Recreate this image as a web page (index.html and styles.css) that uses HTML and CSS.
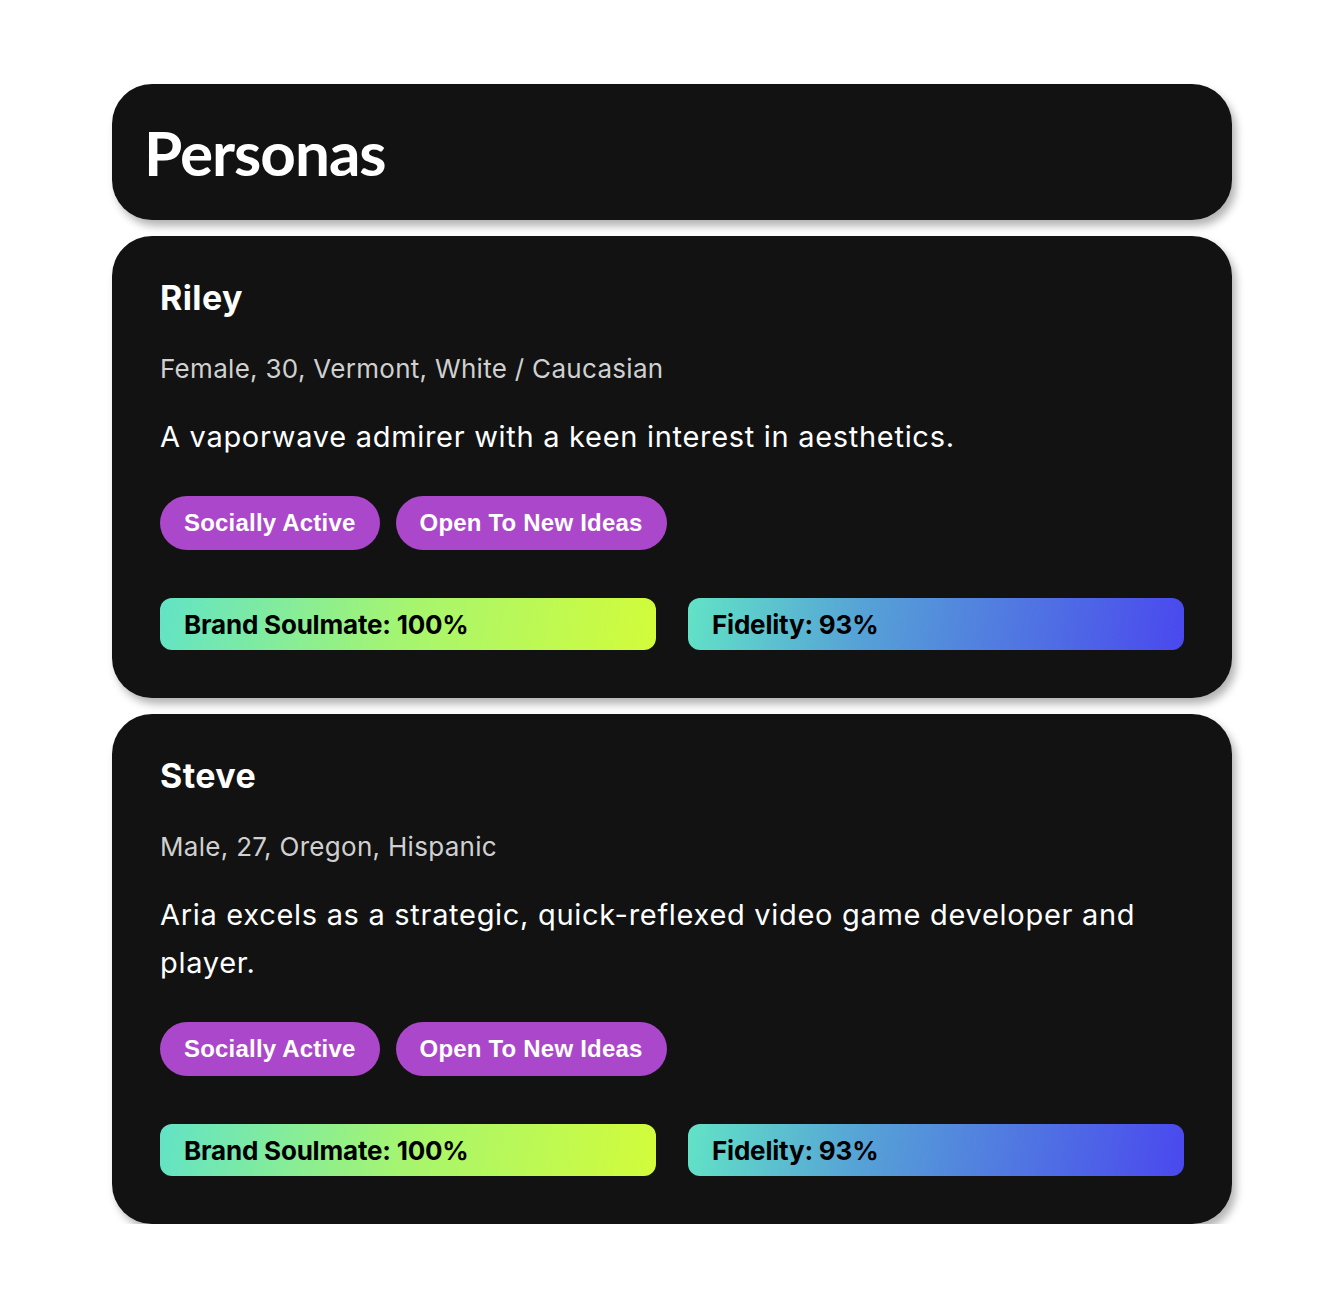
FILE: index.html
```html
<!DOCTYPE html>
<html>
<head>
<meta charset="utf-8">
<link rel="stylesheet" href="styles.css">
</head>
<body>
<main class="page">
  <header class="panel header">
    <h1 class="title">Personas</h1>
  </header>
  <section class="panel card">
    <h2 class="name">Riley</h2>
    <p class="meta">Female, 30, Vermont, White / Caucasian</p>
    <p class="desc">A vaporwave admirer with a keen interest in aesthetics.</p>
    <div class="tags">
      <span class="tag">Socially Active</span>
      <span class="tag">Open To New Ideas</span>
    </div>
    <div class="bars">
      <div class="bar bar-soul">Brand Soulmate: 100%</div>
      <div class="bar bar-fid">Fidelity: 93%</div>
    </div>
  </section>
  <section class="panel card">
    <h2 class="name">Steve</h2>
    <p class="meta">Male, 27, Oregon, Hispanic</p>
    <p class="desc">Aria excels as a strategic, quick-reflexed video game developer and player.</p>
    <div class="tags">
      <span class="tag">Socially Active</span>
      <span class="tag">Open To New Ideas</span>
    </div>
    <div class="bars">
      <div class="bar bar-soul">Brand Soulmate: 100%</div>
      <div class="bar bar-fid">Fidelity: 93%</div>
    </div>
  </section>
</main>
</body>
</html>
```
FILE: styles.css
```css
* { box-sizing: border-box; }
html, body { margin: 0; padding: 0; background: #ffffff; }
body { font-family: "Inter", "Lato", sans-serif; }
.page {
  width: 1120px;
  margin: 84px 0 0 112px;
  display: flex;
  flex-direction: column;
  gap: 16px;
}
.panel {
  background: #121212;
  border-radius: 40px;
  box-shadow: 4px 6px 8px rgba(0, 0, 0, 0.3);
  color: #ffffff;
}
.header {
  height: 136px;
  display: flex;
  align-items: center;
  padding: 0 32px;
}
.title {
  margin: 0;
  font-family: "Lato", sans-serif;
  font-size: 62px;
  font-weight: 700;
  line-height: 1;
  letter-spacing: -1px;
}
.card {
  padding: 42px 48px 48px;
  display: flex;
  flex-direction: column;
}
.name {
  margin: 0;
  font-size: 34px;
  line-height: 40px;
  font-weight: 700;
  letter-spacing: 0.4px;
}
.meta {
  margin: 35px 0 0;
  font-size: 26px;
  line-height: 32px;
  color: #d0d0d0;
  letter-spacing: 0.3px;
}
.desc {
  margin: 28px 0 0;
  font-size: 29px;
  line-height: 48px;
  color: #ffffff;
  letter-spacing: 0.7px;
}
.tags {
  margin-top: 35px;
  display: flex;
  gap: 16px;
}
.tag {
  height: 54px;
  padding: 0 24px;
  border-radius: 27px;
  background: #ab47cb;
  display: flex;
  align-items: center;
  font-family: "Liberation Sans", Arial, sans-serif;
  font-weight: 700;
  font-size: 24px;
  letter-spacing: 0.2px;
  color: #ffffff;
}
.bars {
  margin-top: 48px;
  display: grid;
  grid-template-columns: 1fr 1fr;
  gap: 32px;
}
.bar {
  height: 52px;
  border-radius: 12px;
  padding: 0 24px;
  display: flex;
  align-items: center;
  font-size: 26px;
  font-weight: 700;
  letter-spacing: -0.2px;
  color: #000000;
}
.bar-soul { background: linear-gradient(100deg, #62e3c6 0%, #a6f56f 50%, #d2fc3a 100%); }
.bar-fid { background: linear-gradient(100deg, #62e3c6 0%, #56a2d6 35%, #4a48ee 100%); }
```
